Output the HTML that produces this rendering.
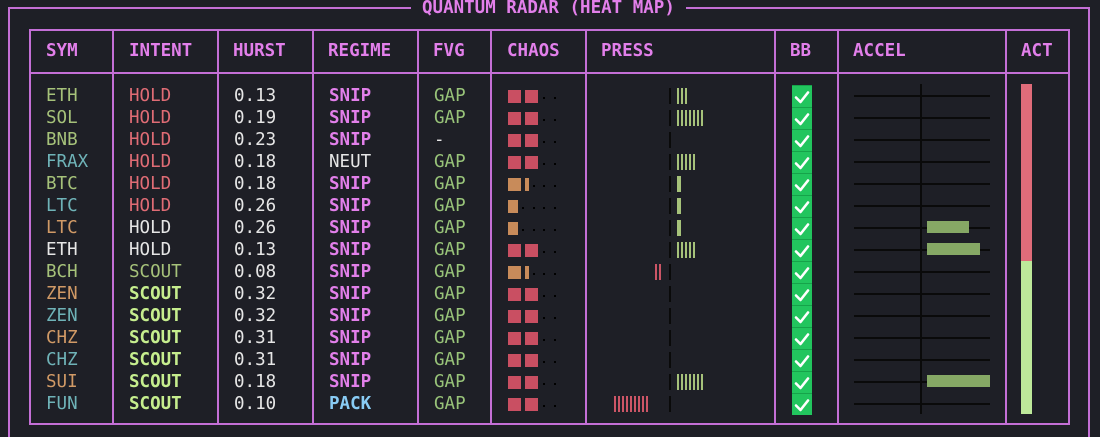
<!DOCTYPE html><html><head><style>
body{margin:0;width:1100px;height:434px;background:#1e1f26;overflow:hidden;position:relative;font-family:"DejaVu Sans Mono","Liberation Mono",monospace;font-size:17.5px;}
.a{position:absolute}
.ln{position:absolute;background:#c46fd6}
.r{position:absolute;left:0;width:1100px;height:22px;line-height:22px}
.r span{position:absolute;top:0}
.h{position:absolute;top:40px;color:#e27fea;font-weight:bold;line-height:22px}
.sq{position:absolute;top:5px;width:13px;height:13px;background:#c94f62}
.o{background:#c88b5a}
.d{position:absolute;top:12px;width:2px;height:2px;background:#000}
.pl{position:absolute;left:669px;top:3px;width:2px;height:16px;background:#0a0a0a}
.bar{position:absolute;top:3px;width:2px;height:16px;background:#a6c27a}
.rb{background:#cc5566}
.bb{position:absolute;left:792px;top:0;width:20px;height:22px;background:#22c55e;border-top:1px solid #16a34a;box-sizing:border-box}
.bb svg{position:absolute;left:2px;top:3px}
.hl{position:absolute;left:854px;top:10px;width:136px;height:2px;background:#0a0a0a}
.ab{position:absolute;left:927px;top:4px;height:12px;background:#86a865}
.b{font-weight:bold}
</style></head><body>
<div class="ln" style="left:8px;top:7px;width:403px;height:2px"></div>
<div class="ln" style="left:686px;top:7px;width:404px;height:2px"></div>
<div class="ln" style="left:8px;top:7px;width:2px;height:430px"></div>
<div class="ln" style="left:1088px;top:7px;width:2px;height:430px"></div>
<div class="a b" style="left:422px;top:-3px;color:#e27fea;line-height:22px">QUANTUM RADAR (HEAT MAP)</div>
<div class="ln" style="left:29px;top:29px;width:1041px;height:2px"></div>
<div class="ln" style="left:29px;top:72px;width:1041px;height:2px"></div>
<div class="ln" style="left:29px;top:423px;width:1041px;height:2px"></div>
<div class="ln" style="left:29px;top:29px;width:2px;height:396px"></div>
<div class="ln" style="left:112px;top:29px;width:2px;height:396px"></div>
<div class="ln" style="left:217px;top:29px;width:2px;height:396px"></div>
<div class="ln" style="left:312px;top:29px;width:2px;height:396px"></div>
<div class="ln" style="left:417px;top:29px;width:2px;height:396px"></div>
<div class="ln" style="left:490px;top:29px;width:2px;height:396px"></div>
<div class="ln" style="left:585px;top:29px;width:2px;height:396px"></div>
<div class="ln" style="left:774px;top:29px;width:2px;height:396px"></div>
<div class="ln" style="left:837px;top:29px;width:2px;height:396px"></div>
<div class="ln" style="left:1005px;top:29px;width:2px;height:396px"></div>
<div class="ln" style="left:1068px;top:29px;width:2px;height:396px"></div>
<div class="h" style="left:46px">SYM</div><div class="h" style="left:129px">INTENT</div><div class="h" style="left:233px">HURST</div><div class="h" style="left:328px">REGIME</div><div class="h" style="left:433px">FVG</div><div class="h" style="left:507px">CHAOS</div><div class="h" style="left:601px">PRESS</div><div class="h" style="left:790px">BB</div><div class="h" style="left:853px">ACCEL</div><div class="h" style="left:1021px">ACT</div>
<div class="a" style="left:920px;top:84px;width:2px;height:330px;background:#0a0a0a"></div>
<div class="a" style="left:1021px;top:84px;width:11px;height:177px;background:#e06c7a"></div>
<div class="a" style="left:1021px;top:261px;width:11px;height:153px;background:#bde89a"></div>
<svg width="0" height="0" style="position:absolute"><defs><symbol id="ck" viewBox="0 0 16 16"><path d="M2 8.5 L6.5 13 L14 3.5" fill="none" stroke="#fff" stroke-width="2.6" stroke-linecap="round" stroke-linejoin="round"/></symbol></defs></svg>

<div class="r" style="top:85px"><span style="left:46px;color:#a6c27a">ETH</span><span style="left:129px;color:#e06c75">HOLD</span><span style="left:234px;color:#e6e6e6">0.13</span><span class="b" style="left:329px;color:#e27fea">SNIP</span><span style="left:434px;color:#98c379">GAP</span><i class="sq" style="left:508px"></i><i class="sq" style="left:525px"></i><i class="d" style="left:543px"></i><i class="d" style="left:554px"></i><i class="pl"></i><i class="bar" style="left:677px"></i><i class="bar" style="left:681px"></i><i class="bar" style="left:685px"></i><i class="bb"><svg width="16" height="16"><use href="#ck"/></svg></i><i class="hl"></i></div>
<div class="r" style="top:107px"><span style="left:46px;color:#a6c27a">SOL</span><span style="left:129px;color:#e06c75">HOLD</span><span style="left:234px;color:#e6e6e6">0.19</span><span class="b" style="left:329px;color:#e27fea">SNIP</span><span style="left:434px;color:#98c379">GAP</span><i class="sq" style="left:508px"></i><i class="sq" style="left:525px"></i><i class="d" style="left:543px"></i><i class="d" style="left:554px"></i><i class="pl"></i><i class="bar" style="left:677px"></i><i class="bar" style="left:681px"></i><i class="bar" style="left:685px"></i><i class="bar" style="left:689px"></i><i class="bar" style="left:693px"></i><i class="bar" style="left:697px"></i><i class="bar" style="left:701px"></i><i class="bb"><svg width="16" height="16"><use href="#ck"/></svg></i><i class="hl"></i></div>
<div class="r" style="top:129px"><span style="left:46px;color:#a6c27a">BNB</span><span style="left:129px;color:#e06c75">HOLD</span><span style="left:234px;color:#e6e6e6">0.23</span><span class="b" style="left:329px;color:#e27fea">SNIP</span><span style="left:434px;color:#e6e6e6">-</span><i class="sq" style="left:508px"></i><i class="sq" style="left:525px"></i><i class="d" style="left:543px"></i><i class="d" style="left:554px"></i><i class="pl"></i><i class="bb"><svg width="16" height="16"><use href="#ck"/></svg></i><i class="hl"></i></div>
<div class="r" style="top:151px"><span style="left:46px;color:#6fb3b8">FRAX</span><span style="left:129px;color:#e06c75">HOLD</span><span style="left:234px;color:#e6e6e6">0.18</span><span style="left:329px;color:#e6e6e6">NEUT</span><span style="left:434px;color:#98c379">GAP</span><i class="sq" style="left:508px"></i><i class="sq" style="left:525px"></i><i class="d" style="left:543px"></i><i class="d" style="left:554px"></i><i class="pl"></i><i class="bar" style="left:677px"></i><i class="bar" style="left:681px"></i><i class="bar" style="left:685px"></i><i class="bar" style="left:689px"></i><i class="bar" style="left:693px"></i><i class="bb"><svg width="16" height="16"><use href="#ck"/></svg></i><i class="hl"></i></div>
<div class="r" style="top:173px"><span style="left:46px;color:#a6c27a">BTC</span><span style="left:129px;color:#e06c75">HOLD</span><span style="left:234px;color:#e6e6e6">0.18</span><span class="b" style="left:329px;color:#e27fea">SNIP</span><span style="left:434px;color:#98c379">GAP</span><i class="sq o" style="left:508px"></i><i class="sq o" style="left:525px;width:4px"></i><i class="d" style="left:533px"></i><i class="d" style="left:543px"></i><i class="d" style="left:554px"></i><i class="pl"></i><i class="bar" style="left:677px;width:4px"></i><i class="bb"><svg width="16" height="16"><use href="#ck"/></svg></i><i class="hl"></i></div>
<div class="r" style="top:195px"><span style="left:46px;color:#6fb3b8">LTC</span><span style="left:129px;color:#e06c75">HOLD</span><span style="left:234px;color:#e6e6e6">0.26</span><span class="b" style="left:329px;color:#e27fea">SNIP</span><span style="left:434px;color:#98c379">GAP</span><i class="sq o" style="left:508px;width:10px"></i><i class="d" style="left:522px"></i><i class="d" style="left:533px"></i><i class="d" style="left:543px"></i><i class="d" style="left:554px"></i><i class="pl"></i><i class="bar" style="left:677px;width:4px"></i><i class="bb"><svg width="16" height="16"><use href="#ck"/></svg></i><i class="hl"></i></div>
<div class="r" style="top:217px"><span style="left:46px;color:#d19a66">LTC</span><span style="left:129px;color:#e6e6e6">HOLD</span><span style="left:234px;color:#e6e6e6">0.26</span><span class="b" style="left:329px;color:#e27fea">SNIP</span><span style="left:434px;color:#98c379">GAP</span><i class="sq o" style="left:508px;width:10px"></i><i class="d" style="left:522px"></i><i class="d" style="left:533px"></i><i class="d" style="left:543px"></i><i class="d" style="left:554px"></i><i class="pl"></i><i class="bar" style="left:677px;width:4px"></i><i class="bb"><svg width="16" height="16"><use href="#ck"/></svg></i><i class="hl"></i><i class="ab" style="width:42px"></i></div>
<div class="r" style="top:239px"><span style="left:46px;color:#e6e6e6">ETH</span><span style="left:129px;color:#e6e6e6">HOLD</span><span style="left:234px;color:#e6e6e6">0.13</span><span class="b" style="left:329px;color:#e27fea">SNIP</span><span style="left:434px;color:#98c379">GAP</span><i class="sq" style="left:508px"></i><i class="sq" style="left:525px"></i><i class="d" style="left:543px"></i><i class="d" style="left:554px"></i><i class="pl"></i><i class="bar" style="left:677px"></i><i class="bar" style="left:681px"></i><i class="bar" style="left:685px"></i><i class="bar" style="left:689px"></i><i class="bar" style="left:693px"></i><i class="bb"><svg width="16" height="16"><use href="#ck"/></svg></i><i class="hl"></i><i class="ab" style="width:53px"></i></div>
<div class="r" style="top:261px"><span style="left:46px;color:#a6c27a">BCH</span><span style="left:129px;color:#a6c27a">SCOUT</span><span style="left:234px;color:#e6e6e6">0.08</span><span class="b" style="left:329px;color:#e27fea">SNIP</span><span style="left:434px;color:#98c379">GAP</span><i class="sq o" style="left:508px"></i><i class="sq o" style="left:525px;width:4px"></i><i class="d" style="left:533px"></i><i class="d" style="left:543px"></i><i class="d" style="left:554px"></i><i class="pl"></i><i class="bar rb" style="left:655px"></i><i class="bar rb" style="left:659px"></i><i class="bb"><svg width="16" height="16"><use href="#ck"/></svg></i><i class="hl"></i></div>
<div class="r" style="top:283px"><span style="left:46px;color:#d19a66">ZEN</span><span class="b" style="left:129px;color:#c6ee8e">SCOUT</span><span style="left:234px;color:#e6e6e6">0.32</span><span class="b" style="left:329px;color:#e27fea">SNIP</span><span style="left:434px;color:#98c379">GAP</span><i class="sq" style="left:508px"></i><i class="sq" style="left:525px"></i><i class="d" style="left:543px"></i><i class="d" style="left:554px"></i><i class="pl"></i><i class="bb"><svg width="16" height="16"><use href="#ck"/></svg></i><i class="hl"></i></div>
<div class="r" style="top:305px"><span style="left:46px;color:#6fb3b8">ZEN</span><span class="b" style="left:129px;color:#c6ee8e">SCOUT</span><span style="left:234px;color:#e6e6e6">0.32</span><span class="b" style="left:329px;color:#e27fea">SNIP</span><span style="left:434px;color:#98c379">GAP</span><i class="sq" style="left:508px"></i><i class="sq" style="left:525px"></i><i class="d" style="left:543px"></i><i class="d" style="left:554px"></i><i class="pl"></i><i class="bb"><svg width="16" height="16"><use href="#ck"/></svg></i><i class="hl"></i></div>
<div class="r" style="top:327px"><span style="left:46px;color:#d19a66">CHZ</span><span class="b" style="left:129px;color:#c6ee8e">SCOUT</span><span style="left:234px;color:#e6e6e6">0.31</span><span class="b" style="left:329px;color:#e27fea">SNIP</span><span style="left:434px;color:#98c379">GAP</span><i class="sq" style="left:508px"></i><i class="sq" style="left:525px"></i><i class="d" style="left:543px"></i><i class="d" style="left:554px"></i><i class="pl"></i><i class="bb"><svg width="16" height="16"><use href="#ck"/></svg></i><i class="hl"></i></div>
<div class="r" style="top:349px"><span style="left:46px;color:#6fb3b8">CHZ</span><span class="b" style="left:129px;color:#c6ee8e">SCOUT</span><span style="left:234px;color:#e6e6e6">0.31</span><span class="b" style="left:329px;color:#e27fea">SNIP</span><span style="left:434px;color:#98c379">GAP</span><i class="sq" style="left:508px"></i><i class="sq" style="left:525px"></i><i class="d" style="left:543px"></i><i class="d" style="left:554px"></i><i class="pl"></i><i class="bb"><svg width="16" height="16"><use href="#ck"/></svg></i><i class="hl"></i></div>
<div class="r" style="top:371px"><span style="left:46px;color:#d19a66">SUI</span><span class="b" style="left:129px;color:#c6ee8e">SCOUT</span><span style="left:234px;color:#e6e6e6">0.18</span><span class="b" style="left:329px;color:#e27fea">SNIP</span><span style="left:434px;color:#98c379">GAP</span><i class="sq" style="left:508px"></i><i class="sq" style="left:525px"></i><i class="d" style="left:543px"></i><i class="d" style="left:554px"></i><i class="pl"></i><i class="bar" style="left:677px"></i><i class="bar" style="left:681px"></i><i class="bar" style="left:685px"></i><i class="bar" style="left:689px"></i><i class="bar" style="left:693px"></i><i class="bar" style="left:697px"></i><i class="bar" style="left:701px"></i><i class="bb"><svg width="16" height="16"><use href="#ck"/></svg></i><i class="hl"></i><i class="ab" style="width:63px"></i></div>
<div class="r" style="top:393px"><span style="left:46px;color:#6fb3b8">FUN</span><span class="b" style="left:129px;color:#c6ee8e">SCOUT</span><span style="left:234px;color:#e6e6e6">0.10</span><span class="b" style="left:329px;color:#89ccf5">PACK</span><span style="left:434px;color:#98c379">GAP</span><i class="sq" style="left:508px"></i><i class="sq" style="left:525px"></i><i class="d" style="left:543px"></i><i class="d" style="left:554px"></i><i class="pl"></i><i class="bar rb" style="left:614px"></i><i class="bar rb" style="left:618px"></i><i class="bar rb" style="left:622px"></i><i class="bar rb" style="left:626px"></i><i class="bar rb" style="left:630px"></i><i class="bar rb" style="left:634px"></i><i class="bar rb" style="left:638px"></i><i class="bar rb" style="left:642px"></i><i class="bar rb" style="left:646px"></i><i class="bb"><svg width="16" height="16"><use href="#ck"/></svg></i><i class="hl"></i></div>
</body></html>
